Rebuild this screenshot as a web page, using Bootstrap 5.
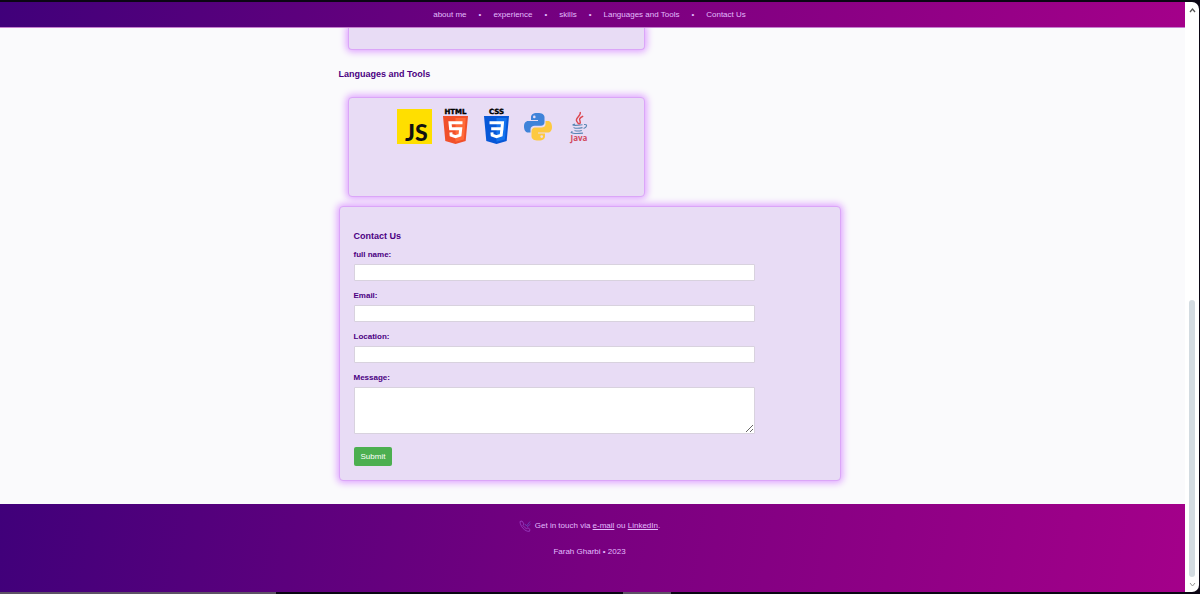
<!DOCTYPE html>
<html lang="en">
<head>
<meta charset="utf-8">
<meta name="viewport" content="width=device-width, initial-scale=1">
<title>Farah Gharbi</title>
<link href="https://cdn.jsdelivr.net/npm/bootstrap@5.3.0/dist/css/bootstrap.min.css" rel="stylesheet">
<style>
  body { background: #0b0614; font: 8px/12px "Liberation Sans", Arial, sans-serif; color: #4b0082; padding: 2px 1px 0 0; }
  .page { background: #fff; border-radius: 0 7px 7px 0; overflow: hidden; }
  .content-col { background: #fafafc; min-width: 0; }
  .band { background: linear-gradient(100deg, #40007a, #780080 50%, #a4008a); color: #e2bcfd; padding-right: 6px; }
  .band a { color: inherit; }
  .topbar { height: 26px; border-bottom: 1px solid #c580cf; }
  .topbar ul { gap: 12px; }
  .main-area { overflow: hidden; padding-right: 6px; }
  .column { width: 100%; max-width: 502px; }
  .panel { background: #e8dcf5; border: 1px solid #dba6f8; border-radius: 4px; box-shadow: 0 0 7px 2px #dfa3ff; }
  .panel-small { width: 297px; max-width: 100%; margin-left: 9px; }
  .panel-tail { height: 22px; border-top: 0; border-radius: 0 0 4px 4px; }
  .section-title { font-size: 9px; line-height: 12px; font-weight: 700; margin: 18px 0; color: #4b0082; }
  #tools .section-title { margin-bottom: 17px; }
  .tools { min-height: 100px; margin-bottom: 9px; padding-top: 11px; gap: 6px; }
  .tools svg { width: 35px; height: 35px; overflow: visible; }
  .contact { padding: 23px 14px 14px; margin-bottom: 23px; }
  .contact h2 { margin: 0 0 7px; }
  .contact label { display: block; font-weight: 700; margin-bottom: 3px; }
  .contact .form-control { width: 85%; min-height: 0; height: 17px; padding: 2px 4px; border: 1px solid #d8d2de; border-radius: 1px; font-size: 8px; line-height: 11px; margin-bottom: 9px; }
  .contact textarea.form-control { height: 47px; margin-bottom: 13px; }
  .submit { background: #4caf50; color: #fff; border: 0; border-radius: 2px; font-size: 8px; line-height: 11px; padding: 4px 7px; }
  .submit:hover { background: #43a047; color: #fff; }
  .foot { padding-top: 16px; padding-bottom: 34px; }
  .foot p { margin: 0 0 14px; }
  .foot p:last-child { margin: 0; }
  .foot svg { width: 12px; height: 12px; }
  .rail { width: 14px; padding: 5px 0 4px; }
  .rail svg { width: 7px; height: 7px; }
  .rail-gap { flex: 286; }
  .rail-thumb { flex: 277; width: 6px; border-radius: 3px; background: #d3dbe1; margin-bottom: 4px; }
  .desk-edge { height: 2px; }
  .desk-edge span { background: #5d5265; }
  .desk-edge .edge-long { width: 23%; }
  .desk-edge .edge-short { width: 4%; margin-left: 29%; }
</style>
</head>
<body class="d-flex flex-column min-vh-100">
<div class="page d-flex flex-grow-1">
  <div class="content-col flex-grow-1 d-flex flex-column">
    <nav class="band topbar d-flex justify-content-center align-items-center" aria-label="Main">
      <ul class="list-unstyled d-flex flex-wrap mb-0">
        <li><a class="text-decoration-none" href="#about">about me</a></li>
        <li>•</li>
        <li><a class="text-decoration-none" href="#experience">experience</a></li>
        <li>•</li>
        <li><a class="text-decoration-none" href="#skills">skills</a></li>
        <li>•</li>
        <li><a class="text-decoration-none" href="#tools">Languages and Tools</a></li>
        <li>•</li>
        <li><a class="text-decoration-none" href="#contact">Contact Us</a></li>
      </ul>
    </nav>

    <main class="main-area">
      <div class="column mx-auto">
        <section class="panel panel-small panel-tail" id="skills"></section>

        <section id="tools">
          <h2 class="section-title">Languages and Tools</h2>
          <div class="panel panel-small tools d-flex justify-content-center align-items-start">
            <svg viewBox="0 0 35 35" role="img" aria-label="JavaScript">
              <rect width="35" height="35" fill="#ffdf00"/>
              <text x="8" y="32" font-family="Lato, sans-serif" font-weight="900" font-size="23" fill="#111">JS</text>
            </svg>
            <svg viewBox="0 0 35 35" role="img" aria-label="HTML5">
              <text x="17.5" y="5.2" text-anchor="middle" font-family="DejaVu Sans, sans-serif" font-weight="700" font-size="7" fill="#000" stroke="#000" stroke-width=".4">HTML</text>
              <path d="M5 7H30L27.7 32L17.5 35L7.3 32Z" fill="#f1502a"/>
              <path d="M17.5 9H27.8L25.9 30.4L17.5 32.8Z" fill="#ff6a39"/>
              <path d="M24.5 13.7H12L12.6 19.7H22.7L22 26.2L17.5 27.6L13.1 26.2L12.9 23.3" fill="none" stroke="#fff" stroke-width="3"/>
            </svg>
            <svg viewBox="0 0 35 35" role="img" aria-label="CSS3">
              <text x="17.5" y="5.2" text-anchor="middle" font-family="DejaVu Sans, sans-serif" font-weight="700" font-size="7" fill="#000" stroke="#000" stroke-width=".4">CSS</text>
              <path d="M5 7H30L27.7 32L17.5 35L7.3 32Z" fill="#0757d7"/>
              <path d="M17.5 9H27.8L25.9 30.4L17.5 32.8Z" fill="#1473ee"/>
              <path d="M10.5 13.7H23.5L23 19.7H12.2M22.9 19.7L22.2 26.2L17.5 27.6L13.2 26.2L12.9 23.3" fill="none" stroke="#fff" stroke-width="3"/>
            </svg>
            <svg viewBox="0 0 35 35" role="img" aria-label="Python">
              <g transform="translate(4 4)">
                <path d="M13.4 0C8.5 0 7 2 7 4.3V7H14V8H4.3C1.5 8 0 10.2 0 13.6C0 17 1.5 19.6 4 19.6H6.5V16.3C6.5 14 8.4 12.7 10.6 12.7H17C19 12.7 20.5 11.2 20.5 9.2V4.3C20.5 1.5 18 0 13.4 0Z" fill="#3f83d9"/>
                <circle cx="10.3" cy="3.9" r="1.3" fill="#e8dcf5"/>
                <path d="M14.6 27.5C19.5 27.5 21 25.5 21 23.2V20.5H14V19.5H23.7C26.5 19.5 28 17.3 28 13.9C28 10.5 26.5 7.9 24 7.9H21.5V11.2C21.5 13.5 19.6 14.5 17.4 14.5H11C9 14.5 7.5 16.3 7.5 18.3V23.2C7.5 26 10 27.5 14.6 27.5Z" fill="#fdc940"/>
                <circle cx="17.7" cy="23.6" r="1.3" fill="#e8dcf5"/>
              </g>
            </svg>
            <svg viewBox="0 0 35 35" role="img" aria-label="Java">
              <path d="M19.2 3C20.5 7 14 8.5 15.6 12C16.2 13.4 17.5 14 17.5 15.5M22.2 7.2C18.5 9 18 10 19 11.8C19.9 13.5 19 14.4 18.2 15.3" fill="none" stroke="#dc4650" stroke-width="1.4"/>
              <path d="M14 15C9 16.3 13 16.8 21.5 15.8M13 18.3C12.5 19.6 18 19.5 21.5 18.6M14 21.2C13.5 22.3 18 22.3 20.8 21.4M11.5 22.6C7 24 14 25.2 22 24.1M23 15.5C27 15 26 18.2 22.6 19.4" fill="none" stroke="#5b87b5" stroke-width="1.1"/>
              <text x="18" y="32" text-anchor="middle" font-family="Open Sans, sans-serif" font-weight="700" font-size="8" fill="#d2495c">Java</text>
            </svg>
          </div>
        </section>

        <section class="panel contact" id="contact">
          <h2 class="section-title">Contact Us</h2>
          <form>
            <label for="fullname">full name:</label>
            <input class="form-control" type="text" id="fullname" name="fullname">
            <label for="email">Email:</label>
            <input class="form-control" type="email" id="email" name="email">
            <label for="location">Location:</label>
            <input class="form-control" type="text" id="location" name="location">
            <label for="message">Message:</label>
            <textarea class="form-control" id="message" name="message"></textarea>
            <button class="btn submit d-block" type="submit">Submit</button>
          </form>
        </section>
      </div>
    </main>

    <footer class="band foot flex-grow-1 text-center">
      <p class="d-flex justify-content-center align-items-center">
        <svg class="me-1" viewBox="0 0 12 12" fill="none" stroke="#a34bd0" stroke-width=".7" aria-hidden="true">
          <path d="M1 1.5L3 1L5 4L4 5.5C5 7 6 8 7.5 8.6L9 7.8L11 9.5L10.5 11.3C6 12 1 6 1 1.5Z"/>
          <path d="M6 4L7.5 6L11 1.5M8 7L11.5 4" stroke="#6a55c8"/>
        </svg>
        <span>Get in touch via <a href="mailto:contact@example.com">e-mail</a> ou <a href="#linkedin">LinkedIn</a>.</span>
      </p>
      <p>Farah Gharbi • 2023</p>
    </footer>
  </div>

  <div class="rail d-flex flex-column align-items-center flex-shrink-0" aria-hidden="true">
    <svg viewBox="0 0 7 7" fill="none" stroke="#555" stroke-width="1.3"><path d="M1 5L3.5 2L6 5"/></svg>
    <div class="rail-gap"></div>
    <div class="rail-thumb"></div>
    <svg viewBox="0 0 7 7" fill="none" stroke="#999" stroke-width="1"><path d="M1 2L3.5 5L6 2"/></svg>
  </div>
</div>
<div class="desk-edge d-flex"><span class="edge-long"></span><span class="edge-short"></span></div>
<script src="https://cdn.jsdelivr.net/npm/bootstrap@5.3.0/dist/js/bootstrap.bundle.min.js"></script>
</body>
</html>
